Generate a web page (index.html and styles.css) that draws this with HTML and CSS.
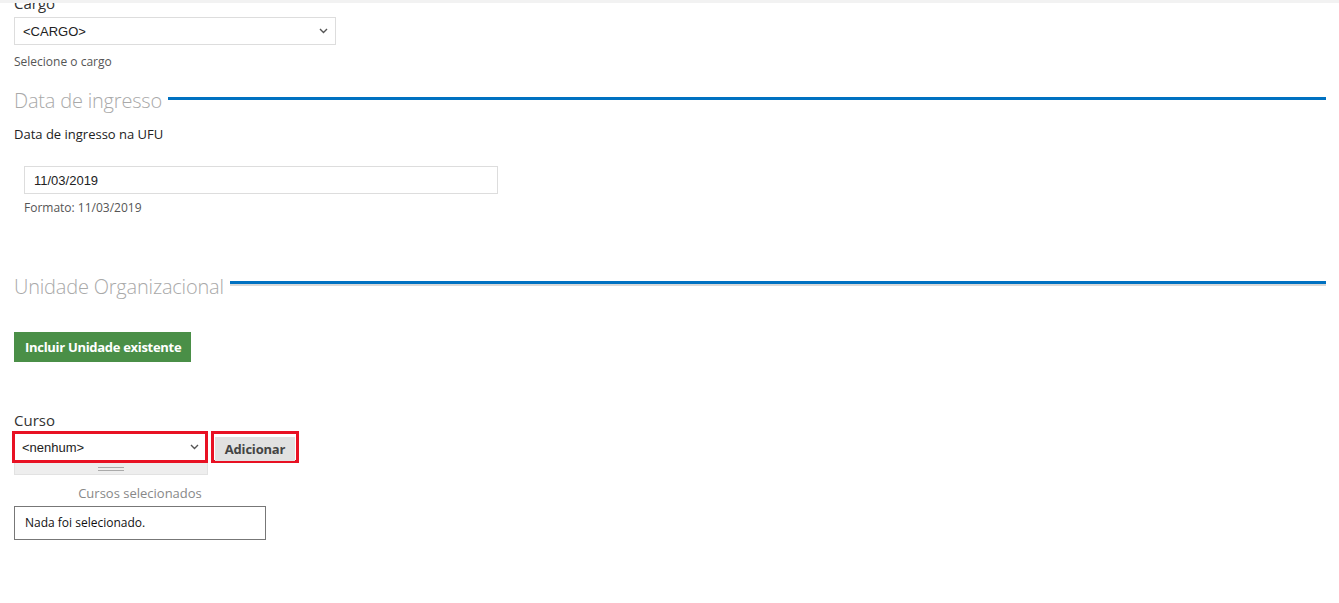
FILE: index.html
```html
<!DOCTYPE html>
<html lang="pt-BR">
<head>
  <meta charset="UTF-8">
  <title>Cadastro</title>
  <link rel="stylesheet" href="styles.css">
</head>
<body>
  <div class="page">
    <div class="field cargo">
      <label class="label">Cargo</label>
      <select class="select wide"><option>&lt;CARGO&gt;</option></select>
      <span class="hint">Selecione o cargo</span>
    </div>

    <h2 class="section"><span>Data de ingresso</span></h2>
    <p class="field-title">Data de ingresso na UFU</p>
    <div class="date-box">
      <input type="text" class="input" value="11/03/2019">
      <span class="hint">Formato: 11/03/2019</span>
    </div>

    <h2 class="section uo"><span>Unidade Organizacional</span></h2>
    <button class="btn-green">Incluir Unidade existente</button>

    <div class="curso">
      <label class="label">Curso</label>
      <div class="curso-row">
        <div class="mark">
          <select class="select small"><option>&lt;nenhum&gt;</option></select>
        </div>
        <div class="mark">
          <button class="btn-gray">Adicionar</button>
        </div>
      </div>
      <div class="resize"><span></span></div>
      <div class="selected">
        <p class="selected-title">Cursos selecionados</p>
        <div class="selected-box">Nada foi selecionado.</div>
      </div>
    </div>
  </div>
</body>
</html>
```

FILE: styles.css
```css
body {
  margin: 0;
  font-family: 'Open Sans', 'Noto Sans', sans-serif;
  color: #222;
  background: #fff;
  border-top: 3px solid #f2f2f2;
}
.page {
  padding: 0 13px 0 14px;
  margin-top: -10px;
}
.label {
  display: block;
  font-size: 15px;
  line-height: 20px;
  color: #333;
}
.select {
  -webkit-appearance: none;
  appearance: none;
  font-family: 'Liberation Sans', Arial, sans-serif;
  font-size: 13px;
  color: #222;
  background: #fff url("data:image/svg+xml,%3Csvg xmlns='http://www.w3.org/2000/svg' width='9' height='6'%3E%3Cpath d='M1 1l3.5 3.5L8 1' fill='none' stroke='%23555' stroke-width='1.4'/%3E%3C/svg%3E") no-repeat right 7px center;
  border: 1px solid #ddd;
  height: 28px;
  padding: 0 8px;
  border-radius: 0;
}
.select.wide {
  width: 322px;
  margin-top: 4px;
}
.hint {
  display: block;
  font-size: 12px;
  color: #555;
  margin-top: 8px;
}
.section {
  display: flex;
  align-items: center;
  gap: 6px;
  font-size: 20px;
  font-weight: 300;
  color: #a9a9a9;
  margin: 18px 0 0;
  line-height: 26px;
  letter-spacing: -0.2px;
}
.section::after {
  content: '';
  flex: 1;
  height: 3px;
  background: #0071c1;
  margin-top: -5px;
}
.section.uo {
  margin-top: 58px;
}
.section.uo::after {
  border-bottom: 2px solid #d9d9d9;
  margin-top: -8px;
}
.field-title {
  font-size: 13px;
  margin: 11px 0 0;
}
.date-box {
  padding-left: 10px;
  margin-top: 23px;
}
.input {
  display: block;
  width: 474px;
  height: 28px;
  box-sizing: border-box;
  border: 1px solid #ddd;
  font-family: 'Liberation Sans', Arial, sans-serif;
  font-size: 13px;
  padding: 0 9px;
  color: #222;
}
.date-box .hint {
  margin-top: 5px;
}
.btn-green {
  display: block;
  margin-top: 32px;
  background: #4a8f47;
  color: #fff;
  border: none;
  height: 30px;
  padding: 0 10px 0 11px;
  font-family: 'Open Sans', sans-serif;
  font-weight: 700;
  font-size: 13px;
  letter-spacing: -0.3px;
}
.curso {
  margin-top: 48px;
  width: 300px;
}
.curso-row {
  display: flex;
  gap: 3px;
  margin-left: -2px;
  margin-top: 1px;
}
.mark {
  border: 3px solid #e81123;
  padding: 1px;
  display: flex;
}
.select.small {
  width: 188px;
  height: 24px;
  border: none;
  padding: 0 6px;
  background-position: right 5px center;
}
.btn-gray {
  background: #e1e1e1;
  border: none;
  height: 24px;
  width: 80px;
  margin-top: 2px;
  margin-bottom: -2px;
  font-family: 'Open Sans', sans-serif;
  font-weight: 700;
  font-size: 13px;
  color: #444;
  letter-spacing: -0.2px;
}
.resize {
  width: 192px;
  height: 11px;
  background: #eee;
  border: 1px solid #e2e2e2;
  border-top: none;
  display: flex;
  align-items: center;
  justify-content: center;
}
.resize span {
  width: 26px;
  height: 2px;
  border-top: 1px solid #aaa;
  border-bottom: 1px solid #aaa;
}
.selected {
  width: 252px;
  margin-top: 9px;
}
.selected-title {
  text-align: center;
  font-size: 13px;
  color: #888;
  margin: 0 0 4px;
}
.selected-box {
  border: 1px solid #777;
  height: 32px;
  line-height: 32px;
  padding-left: 10px;
  font-size: 12px;
  color: #111;
}
```
